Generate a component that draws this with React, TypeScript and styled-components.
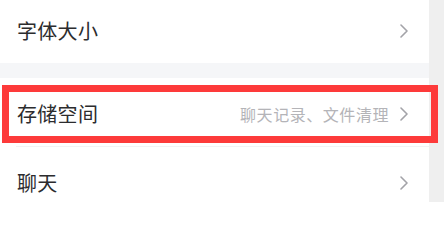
import React from 'react';
import styled, { createGlobalStyle } from 'styled-components';

const GlobalStyle = createGlobalStyle`
  html, body {
    margin: 0;
    padding: 0;
    background: #ffffff;
    overflow: hidden;
  }
  body {
    font-family: "Noto Sans CJK SC", "Noto Sans", sans-serif;
  }
`;

const Page = styled.div`
  position: relative;
  display: flex;
  width: 444px;
  height: 202px;
  overflow: hidden;
`;

const List = styled.div`
  flex: 1;
  min-width: 0;
  display: flex;
  flex-direction: column;
  margin-top: -5px;
  background: #ffffff;
`;

const Strip = styled.div`
  width: 15px;
  flex-shrink: 0;
  background: #efefef;
`;

const Row = styled.div`
  display: flex;
  align-items: center;
  height: 68px;
  box-sizing: border-box;
  padding: 4px 21px 0 17px;
  flex-shrink: 0;
`;

const Gap = styled.div`
  height: 15px;
  flex-shrink: 0;
  background: #f5f6f8;
`;

const Label = styled.span`
  flex: 1;
  font-size: 20px;
  line-height: 1;
  color: #2c2c2e;
  letter-spacing: 0.3px;
  white-space: nowrap;
`;

const Hint = styled.span`
  flex-shrink: 0;
  font-size: 16px;
  line-height: 1;
  color: #b4b4b8;
  margin-right: 11px;
  letter-spacing: 0.55px;
  white-space: nowrap;
`;

const Divider = styled.div`
  height: 1px;
  margin-left: 16px;
  background: #f2f2f4;
  flex-shrink: 0;
`;

const ChevronIcon = styled.svg`
  flex-shrink: 0;
  display: block;
`;

const Highlight = styled.div`
  position: absolute;
  left: 2px;
  top: 85px;
  width: 436px;
  height: 58px;
  box-sizing: border-box;
  border: 7px solid #fd3a3a;
  pointer-events: none;
`;

function Chevron() {
  return (
    <ChevronIcon width="8" height="14" viewBox="0 0 8 14" fill="none">
      <polyline
        points="1,1 7,7 1,13"
        stroke="#a3a3a8"
        strokeWidth="1.6"
        strokeLinecap="round"
        strokeLinejoin="round"
      />
    </ChevronIcon>
  );
}

type ItemProps = {
  label: string;
  hint?: string;
};

function Item({ label, hint }: ItemProps) {
  return (
    <Row>
      <Label>{label}</Label>
      {hint && <Hint>{hint}</Hint>}
      <Chevron />
    </Row>
  );
}

export default function App() {
  return (
    <>
      <GlobalStyle />
      <Page>
        <List>
          <Item label="字体大小" />
          <Gap />
          <Item label="存储空间" hint="聊天记录、文件清理" />
          <Divider />
          <Item label="聊天" />
        </List>
        <Strip />
        <Highlight />
      </Page>
    </>
  );
}
